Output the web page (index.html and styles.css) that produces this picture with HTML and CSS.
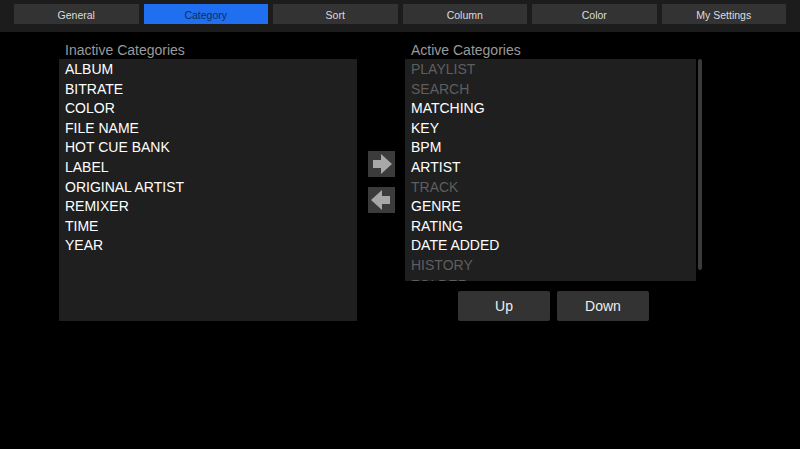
FILE: index.html
```html
<!DOCTYPE html>
<html lang="en">
<head>
    <meta charset="UTF-8">
    <title>Category Settings</title>
    <link rel="stylesheet" href="styles.css">
</head>
<body>

    <!-- Settings Tabs -->
    <div class="tab-bar">
        <div class="tab">General</div>
        <div class="tab active">Category</div>
        <div class="tab">Sort</div>
        <div class="tab">Column</div>
        <div class="tab">Color</div>
        <div class="tab">My Settings</div>
    </div>

    <div class="category-panel">
        <!-- Inactive list -->
        <div class="column inactive-col">
            <div class="list-label">Inactive Categories</div>
            <ul class="cat-list inactive-list">
                <li>ALBUM</li>
                <li>BITRATE</li>
                <li>COLOR</li>
                <li>FILE NAME</li>
                <li>HOT CUE BANK</li>
                <li>LABEL</li>
                <li>ORIGINAL ARTIST</li>
                <li>REMIXER</li>
                <li>TIME</li>
                <li>YEAR</li>
            </ul>
        </div>

        <!-- Move buttons -->
        <div class="move-buttons">
            <div class="arrow-btn">
                <svg width="27" height="26" viewBox="0 0 27 26">
                    <rect x="5" y="9" width="9" height="8" fill="#a8a8a8"/>
                    <polygon points="13,3 24,13 13,23" fill="#a8a8a8"/>
                </svg>
            </div>
            <div class="arrow-btn">
                <svg width="27" height="26" viewBox="0 0 27 26">
                    <rect x="13" y="9" width="9" height="8" fill="#a8a8a8"/>
                    <polygon points="14,3 3,13 14,23" fill="#a8a8a8"/>
                </svg>
            </div>
        </div>

        <!-- Active list -->
        <div class="column active-col">
            <div class="list-label">Active Categories</div>
            <div class="list-wrap">
                <ul class="cat-list active-list">
                    <li class="dim">PLAYLIST</li>
                    <li class="dim">SEARCH</li>
                    <li>MATCHING</li>
                    <li>KEY</li>
                    <li>BPM</li>
                    <li>ARTIST</li>
                    <li class="dim">TRACK</li>
                    <li>GENRE</li>
                    <li>RATING</li>
                    <li>DATE ADDED</li>
                    <li class="dim">HISTORY</li>
                    <li class="dim">FOLDER</li>
                </ul>
                <div class="scrollbar"></div>
            </div>
            <div class="order-buttons">
                <button class="order-btn">Up</button>
                <button class="order-btn">Down</button>
            </div>
        </div>
    </div>

</body>
</html>
```

FILE: styles.css
```css
body {
    margin: 0;
    padding: 0;
    width: 800px;
    height: 449px;
    background-color: #000;
    font-family: "Liberation Sans", Arial, sans-serif;
    overflow: hidden;
}

/* Tabs */
.tab-bar {
    height: 32px;
    background-color: #1c1c1c;
    display: flex;
    gap: 5px;
    padding: 4px 14px 0 14px;
    box-sizing: border-box;
}

.tab {
    flex: 1;
    height: 20px;
    line-height: 22px;
    background-color: #333;
    color: #ddd;
    font-size: 10.5px;
    text-align: center;
}

.tab.active {
    background-color: #1f6ff0;
    color: #0c2d66;
}

/* Panel */
.category-panel {
    display: flex;
    padding: 9px 0 0 59px;
}

.list-label {
    color: #9a9a9a;
    font-size: 14px;
    line-height: 18px;
    padding-left: 6px;
}

.cat-list {
    list-style-type: none;
    margin: 0;
    padding: 1px 0 0 6px;
    box-sizing: border-box;
    background-color: #1f1f1f;
    color: #fff;
    font-size: 14px;
    overflow: hidden;
}

.cat-list li {
    line-height: 19.6px;
    height: 19.6px;
}

.inactive-list {
    width: 298px;
    height: 262px;
}

.move-buttons {
    display: flex;
    flex-direction: column;
    gap: 10px;
    padding: 110px 10px 0 11px;
}

.arrow-btn {
    width: 27px;
    height: 26px;
    background-color: #3b3b3b;
}

.arrow-btn svg {
    display: block;
}

.list-wrap {
    display: flex;
    gap: 2px;
}

.active-list {
    width: 291px;
    height: 222px;
}

.cat-list li.dim {
    color: #5e5e5e;
}

.scrollbar {
    width: 4px;
    height: 211px;
    background-color: #3a3a3a;
    border-radius: 2px;
}

.order-buttons {
    display: flex;
    gap: 7px;
    padding: 10px 0 0 53px;
}

.order-btn {
    width: 92px;
    height: 30px;
    background-color: #333;
    color: #eee;
    border: none;
    border-radius: 2px;
    font-family: "Liberation Sans", Arial, sans-serif;
    font-size: 14px;
    padding: 0;
}
```
